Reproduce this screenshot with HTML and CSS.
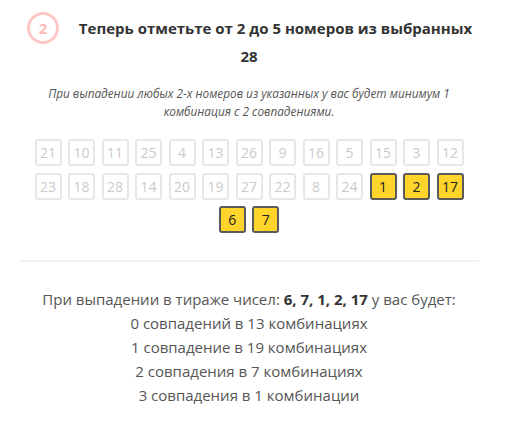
FILE: index.html
```html
<!DOCTYPE html>
<html lang="ru">
<head>
<meta charset="utf-8">
<title>Выбор номеров</title>
<link rel="stylesheet" href="styles.css">
</head>
<body>
<div class="wrap">
  <h2 class="title"><span class="step">2</span>Теперь отметьте от 2 до 5 номеров из выбранных 28</h2>
  <p class="note">При выпадении любых 2-х номеров из указанных у вас будет минимум 1 комбинация с 2 совпадениями.</p>
  <div class="grid">
    <span class="num">21</span><span class="num">10</span><span class="num">11</span><span class="num">25</span><span class="num">4</span><span class="num">13</span><span class="num">26</span><span class="num">9</span><span class="num">16</span><span class="num">5</span><span class="num">15</span><span class="num">3</span><span class="num">12</span>
    <span class="num">23</span><span class="num">18</span><span class="num">28</span><span class="num">14</span><span class="num">20</span><span class="num">19</span><span class="num">27</span><span class="num">22</span><span class="num">8</span><span class="num">24</span><span class="num sel">1</span><span class="num sel">2</span><span class="num sel">17</span>
    <span class="num sel">6</span><span class="num sel">7</span>
  </div>
  <div class="sep"></div>
  <div class="result">
    <div>При выпадении в тираже чисел: <b>6, 7, 1, 2, 17</b> у вас будет:</div>
    <div>0 совпадений в 13 комбинациях</div>
    <div>1 совпадение в 19 комбинациях</div>
    <div>2 совпадения в 7 комбинациях</div>
    <div>3 совпадения в 1 комбинации</div>
  </div>
</div>
</body>
</html>
```
FILE: styles.css
```css
html, body {
  margin: 0;
  padding: 0;
  background: #fff;
}
body {
  font-family: "Open Sans", "Liberation Sans", sans-serif;
  color: #555;
}
.wrap {
  width: 460px;
  margin-left: 19px;
  padding-top: 14px;
}
.title {
  margin: 0;
  font-size: 15px;
  font-weight: 700;
  line-height: 28px;
  color: #333;
  text-align: center;
}
.step {
  float: left;
  box-sizing: border-box;
  width: 32px;
  height: 32px;
  margin: -2px 13px -12px 8px;
  border: 3px solid #ffc6c6;
  border-radius: 50%;
  display: flex;
  align-items: center;
  justify-content: center;
  color: #ffb8b8;
  font-size: 15px;
  font-weight: 700;
  line-height: 1;
}
.note {
  margin: 14px 0 0;
  padding: 0 6px;
  font-size: 11.8px;
  font-style: italic;
  line-height: 18px;
  color: #555;
  text-align: center;
}
.grid {
  margin-top: 19px;
  display: flex;
  flex-wrap: wrap;
  justify-content: center;
  gap: 6.5px;
}
.num {
  box-sizing: border-box;
  width: 27px;
  height: 27px;
  border: 2px solid #e7e7e7;
  border-radius: 3px;
  display: flex;
  align-items: center;
  justify-content: center;
  font-size: 14px;
  color: #cacaca;
}
.num.sel {
  background: #ffd52b;
  border: 2.5px solid #5a5a5a;
  color: #222;
}
.sep {
  height: 2px;
  background: #f3f3f3;
  margin-top: 27px;
}
.result {
  margin-top: 25px;
  font-size: 15px;
  line-height: 24px;
  color: #555;
  text-align: center;
}
.result b {
  color: #333;
}
```
